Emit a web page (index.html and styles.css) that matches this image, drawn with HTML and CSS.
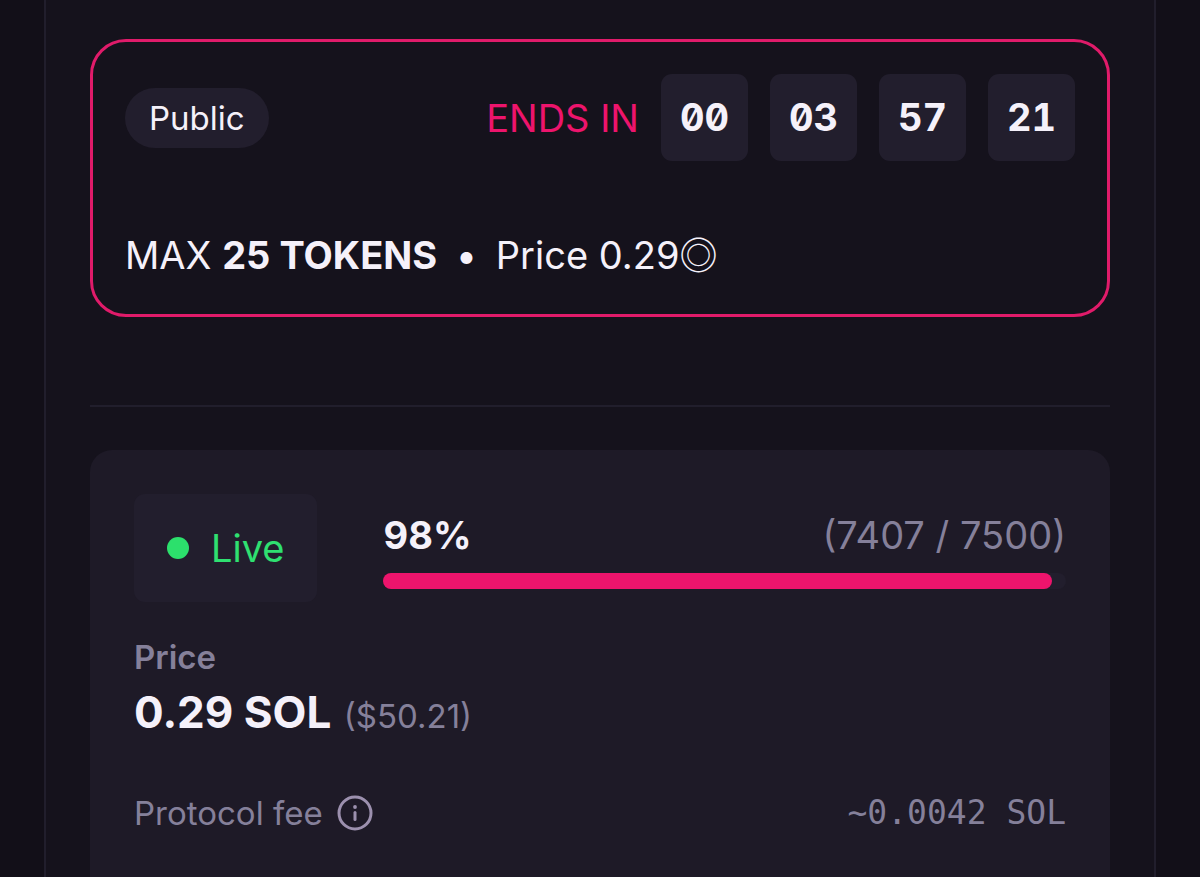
FILE: index.html
```html
<!DOCTYPE html>
<html lang="en">
<head>
<meta charset="utf-8">
<meta name="viewport" content="width=device-width, initial-scale=1">
<title>Public mint</title>
<link rel="stylesheet" href="styles.css">
</head>
<body>
<main class="panel">
  <section class="phase">
    <div class="phase-head">
      <span class="badge">Public</span>
      <div class="countdown">
        <span class="countdown-label">ENDS IN</span>
        <div class="timer" role="timer">
          <span class="unit">00</span>
          <span class="unit">03</span>
          <span class="unit">57</span>
          <span class="unit">21</span>
        </div>
      </div>
    </div>
    <p class="terms">MAX <strong>25 TOKENS</strong> <span class="bullet">•</span> Price 0.29<span class="sol">◎</span></p>
  </section>
  <hr class="divider">
  <section class="mint">
    <div class="status">
      <div class="live"><span class="dot"></span>Live</div>
      <div class="progress">
        <div class="progress-text">
          <strong>98%</strong>
          <span class="muted">(7407 / 7500)</span>
        </div>
        <div class="track"><div class="fill" style="width: 98%"></div></div>
      </div>
    </div>
    <h2 class="price-label">Price</h2>
    <p class="price"><strong>0.29 SOL</strong> <span class="usd">($50.21)</span></p>
    <div class="fee">
      <span class="fee-name">Protocol fee
        <svg class="info" viewBox="0 0 36 36" fill="none" stroke="currentColor" stroke-width="3" stroke-linecap="round" aria-hidden="true">
          <circle cx="18" cy="18" r="16"/>
          <path d="M18 17.500v7"/>
          <circle cx="18" cy="12" r="1.900" fill="currentColor" stroke="none"/>
        </svg>
      </span>
      <span class="fee-value">~0.0042 SOL</span>
    </div>
  </section>
</main>
</body>
</html>
```
FILE: styles.css
```css
* {
  box-sizing: border-box;
}

body {
  margin: 0;
  background: #120f18;
  color: #f5f1fa;
  font-family: Inter, "Liberation Sans", sans-serif;
  font-size: 38px;
  font-optical-sizing: none;
  line-height: 54px;
}

p, h2 {
  margin: 0;
}

.panel {
  min-height: 100vh;
  margin: 0 44px;
  padding: 39px 44px 0;
  border: solid #211e2c;
  border-width: 0 2px;
  background: #15121c;
  display: flex;
  flex-direction: column;
}

.phase {
  padding: 32px;
  border: 3px solid #e01b6a;
  border-radius: 36px;
  display: flex;
  flex-direction: column;
  gap: 67px;
}

.phase-head,
.countdown,
.timer,
.status,
.live,
.progress-text,
.fee,
.fee-name {
  display: flex;
  align-items: center;
}

.phase-head,
.progress-text,
.fee {
  justify-content: space-between;
}

.badge {
  padding: 8px 24px;
  border-radius: 30px;
  background: #221e2d;
  font-size: 33px;
  line-height: 44px;
}

.countdown {
  gap: 22px;
}

.countdown-label {
  color: #ed146c;
}

.timer {
  gap: 22px;
}

.unit {
  width: 87px;
  height: 87px;
  border-radius: 11px;
  background: #221e2d;
  font-weight: 700;
  font-feature-settings: "tnum", "zero";
  line-height: 87px;
  text-align: center;
}

.bullet {
  margin: 0 8px;
}

.sol {
  font-family: "Noto Sans CJK JP", "DejaVu Sans", sans-serif;
  line-height: 1;
}

.divider {
  width: 100%;
  height: 2px;
  margin: 88px 0 43px;
  border: 0;
  background: #211e2c;
}

.mint {
  flex: 1;
  padding: 44px 44px 40px;
  border-radius: 22px 22px 0 0;
  background: #1e1a27;
}

.status {
  gap: 66px;
}

.live {
  padding: 27px 33px;
  border-radius: 11px;
  background: #221e2d;
  color: #2fe071;
  gap: 22px;
}

.dot {
  width: 22px;
  height: 22px;
  border-radius: 50%;
  background: #2ce06c;
}

.progress {
  flex: 1;
}

.progress-text {
  margin-bottom: 11px;
}

.muted,
.price-label,
.usd,
.fee {
  color: #85809a;
}

.track {
  height: 16px;
  border-radius: 8px;
  background: #221e2d;
}

.fill {
  height: 100%;
  border-radius: 8px;
  background: #ed146c;
}

.price-label {
  margin-top: 33px;
  font-size: 33px;
  font-weight: 600;
  line-height: 44px;
}

.price {
  margin-top: 6px;
  font-size: 44px;
}

.usd {
  font-size: 33px;
}

.fee {
  margin-top: 48px;
  font-size: 33px;
  line-height: 44px;
}

.fee-name {
  gap: 14px;
}

.info {
  width: 36px;
  height: 36px;
  color: #9c90ae;
}

.fee-value {
  font-family: "DejaVu Sans Mono", monospace;
}
```
